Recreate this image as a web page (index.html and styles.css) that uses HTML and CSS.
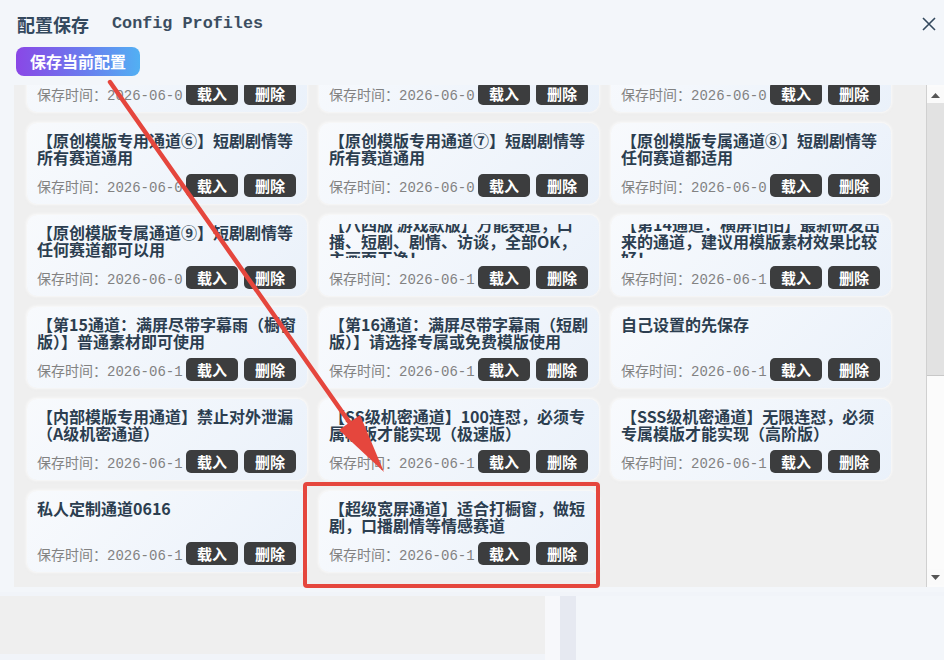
FILE: index.html
```html
<!DOCTYPE html>
<html lang="zh-CN">
<head>
    <meta charset="UTF-8">
    <meta name="viewport" content="width=device-width, initial-scale=1.0">
    <title>配置保存</title>
    <link rel="stylesheet" href="styles.css">
</head>
<body>
    <div class="dialog">
        <div class="dialog-head">
            <h1 class="dialog-title">配置保存<span class="en">Config Profiles</span></h1>
            <button class="close-btn" aria-label="关闭">
                <svg width="14" height="14" viewBox="0 0 14 14"><path d="M1 1L13 13M13 1L1 13" stroke="#34495e" stroke-width="1.6" fill="none"/></svg>
            </button>
        </div>
        <div class="toolbar">
            <button class="save-btn">保存当前配置</button>
        </div>

        <div class="list-wrap">
            <div class="profile-list" id="profileList">
                <div class="profile-grid">
                    <div class="card">
                        <div class="card-title">【原创模版专用通道③】短剧剧情等所有赛道通用</div>
                        <div class="card-foot"><span class="time">保存时间：2026-06-03 10:12</span><button class="btn">载入</button><button class="btn">删除</button></div>
                    </div>
                    <div class="card">
                        <div class="card-title">【原创模版专用通道④】短剧剧情等所有赛道通用</div>
                        <div class="card-foot"><span class="time">保存时间：2026-06-03 10:20</span><button class="btn">载入</button><button class="btn">删除</button></div>
                    </div>
                    <div class="card">
                        <div class="card-title">【原创模版专用通道⑤】短剧剧情等所有赛道通用</div>
                        <div class="card-foot"><span class="time">保存时间：2026-06-04 09:41</span><button class="btn">载入</button><button class="btn">删除</button></div>
                    </div>

                    <div class="card">
                        <div class="card-title">【原创模版专用通道⑥】短剧剧情等所有赛道通用</div>
                        <div class="card-foot"><span class="time">保存时间：2026-06-05 14:02</span><button class="btn">载入</button><button class="btn">删除</button></div>
                    </div>
                    <div class="card">
                        <div class="card-title">【原创模版专用通道⑦】短剧剧情等所有赛道通用</div>
                        <div class="card-foot"><span class="time">保存时间：2026-06-05 14:30</span><button class="btn">载入</button><button class="btn">删除</button></div>
                    </div>
                    <div class="card">
                        <div class="card-title">【原创模版专属通道⑧】短剧剧情等任何赛道都适用</div>
                        <div class="card-foot"><span class="time">保存时间：2026-06-06 11:18</span><button class="btn">载入</button><button class="btn">删除</button></div>
                    </div>

                    <div class="card">
                        <div class="card-title">【原创模版专属通道⑨】短剧剧情等任何赛道都可以用</div>
                        <div class="card-foot"><span class="time">保存时间：2026-06-08 16:45</span><button class="btn">载入</button><button class="btn">删除</button></div>
                    </div>
                    <div class="card">
                        <div class="card-title is-long"><span>【八四版 游戏款版】万能赛道，口播、短剧、剧情、访谈，全部OK，主画面干净！</span></div>
                        <div class="card-foot"><span class="time">保存时间：2026-06-10 13:07</span><button class="btn">载入</button><button class="btn">删除</button></div>
                    </div>
                    <div class="card">
                        <div class="card-title is-long"><span>【第14通道：横屏怕怕】最新研发出来的通道，建议用模版素材效果比较好！</span></div>
                        <div class="card-foot"><span class="time">保存时间：2026-06-11 20:33</span><button class="btn">载入</button><button class="btn">删除</button></div>
                    </div>

                    <div class="card">
                        <div class="card-title">【第15通道：满屏尽带字幕雨（橱窗版）】普通素材即可使用</div>
                        <div class="card-foot"><span class="time">保存时间：2026-06-12 09:15</span><button class="btn">载入</button><button class="btn">删除</button></div>
                    </div>
                    <div class="card">
                        <div class="card-title">【第16通道：满屏尽带字幕雨（短剧版）】请选择专属或免费模版使用</div>
                        <div class="card-foot"><span class="time">保存时间：2026-06-12 09:40</span><button class="btn">载入</button><button class="btn">删除</button></div>
                    </div>
                    <div class="card">
                        <div class="card-title">自己设置的先保存</div>
                        <div class="card-foot"><span class="time">保存时间：2026-06-13 18:22</span><button class="btn">载入</button><button class="btn">删除</button></div>
                    </div>

                    <div class="card">
                        <div class="card-title">【内部模版专用通道】禁止对外泄漏（A级机密通道）</div>
                        <div class="card-foot"><span class="time">保存时间：2026-06-14 10:05</span><button class="btn">载入</button><button class="btn">删除</button></div>
                    </div>
                    <div class="card">
                        <div class="card-title">【SS级机密通道】100连怼，必须专属模版才能实现（极速版）</div>
                        <div class="card-foot"><span class="time">保存时间：2026-06-15 15:51</span><button class="btn">载入</button><button class="btn">删除</button></div>
                    </div>
                    <div class="card">
                        <div class="card-title">【SSS级机密通道】无限连怼，必须专属模版才能实现（高阶版）</div>
                        <div class="card-foot"><span class="time">保存时间：2026-06-15 16:20</span><button class="btn">载入</button><button class="btn">删除</button></div>
                    </div>

                    <div class="card">
                        <div class="card-title">私人定制通道0616</div>
                        <div class="card-foot"><span class="time">保存时间：2026-06-16 08:30</span><button class="btn">载入</button><button class="btn">删除</button></div>
                    </div>
                    <div class="card">
                        <div class="card-title">【超级宽屏通道】适合打橱窗，做短剧，口播剧情等情感赛道</div>
                        <div class="card-foot"><span class="time">保存时间：2026-06-16 21:12</span><button class="btn">载入</button><button class="btn">删除</button></div>
                    </div>
                </div>
            </div>

            <!-- classic scrollbar next to the list -->
            <div class="scrollbar">
                <div class="sb-arrow"><svg width="9" height="5" viewBox="0 0 9 5"><path d="M0 5L4.5 0L9 5Z" fill="#555"/></svg></div>
                <div class="sb-thumb"></div>
                <div class="sb-track"></div>
                <div class="sb-arrow"><svg width="9" height="5" viewBox="0 0 9 5"><path d="M0 0L4.5 5L9 0Z" fill="#555"/></svg></div>
            </div>
        </div>
    </div>

    <!-- part of the main window under the dialog -->
    <div class="app-back">
        <div class="app-left"></div>
        <div class="app-gap"></div>
        <div class="app-divider"></div>
        <div class="app-right"></div>
    </div>

    <!-- red markup drawn on top -->
    <svg class="markup" width="944" height="660" viewBox="0 0 944 660">
        <line x1="110" y1="82" x2="352" y2="426" stroke="#e5463d" stroke-width="4.5" stroke-linecap="round"/>
        <polygon points="384,472 360,415 339,430" fill="#e5463d"/>
        <rect x="305" y="484" width="293" height="102" rx="2" fill="none" stroke="#e5463d" stroke-width="4"/>
    </svg>

    <script>
        // list is shown scrolled down a bit
        document.getElementById("profileList").scrollTop = 62;
    </script>
</body>
</html>
```

FILE: styles.css
```css
body {
    margin: 0;
    background-color: #f1f4f9;
    font-family: "Noto Sans CJK SC", "Noto Sans", sans-serif;
    overflow: hidden;
}
.dialog {
    background-color: #f3f6fa;
    padding-bottom: 5px;
}
.dialog-head {
    display: flex;
    justify-content: space-between;
    align-items: center;
    padding: 11px 8px 0 17px;
    height: 26px;
}
.dialog-title {
    margin: 0;
    font-size: 18px;
    line-height: 24px;
    font-weight: 700;
    color: #34495e;
    display: flex;
    align-items: center;
}
.dialog-title .en {
    font-family: "Liberation Mono", monospace;
    font-size: 16.8px;
    font-weight: 700;
    margin-left: 23px;
    color: #3b4d60;
}
.close-btn {
    border: none;
    background: none;
    padding: 0;
    width: 14px;
    height: 14px;
}
.toolbar {
    padding: 10px 0 9px 16px;
}
.save-btn {
    height: 29px;
    padding: 0 14px;
    border: none;
    border-radius: 8px;
    background: linear-gradient(90deg, #8a47e6, #6a7cee 55%, #52b0f3);
    color: #fff;
    font-family: "Noto Sans CJK SC", sans-serif;
    font-size: 16px;
    font-weight: 700;
    line-height: 29px;
}
.list-wrap {
    display: flex;
    height: 502px;
    margin-left: 14px;
    background-color: #efefef;
}
.profile-list {
    flex: 1;
    overflow: hidden;
}
.profile-grid {
    display: grid;
    grid-template-columns: repeat(3, 280px);
    gap: 11px 12px;
    padding: 8px 0 18px 13px;
}
.card {
    background: linear-gradient(135deg, #f8fafd, #eaf1fa);
    border-radius: 10px;
    padding: 9px 11px 7px 10px;
    box-shadow: 0 0 3px 1px rgba(255, 255, 255, 0.9), 0 1px 4px rgba(0, 0, 0, 0.05);
}
.card-title {
    height: 34px;
    overflow: hidden;
    font-size: 16px;
    line-height: 17px;
    font-weight: 700;
    color: #2c3e50;
    margin-bottom: 8px;
}
.card-title.is-long {
    display: flex;
    align-items: center;
}
.card-foot {
    display: flex;
    align-items: center;
    height: 23px;
}
.time {
    flex: 1;
    overflow: hidden;
    white-space: nowrap;
    font-family: "Liberation Mono", "Noto Sans CJK SC", monospace;
    font-size: 14px;
    color: #828282;
    margin-right: 3px;
}
.btn {
    width: 52px;
    height: 23px;
    padding: 0;
    border: none;
    border-radius: 5px;
    background-color: #3c3d3e;
    color: #fff;
    font-family: "Noto Sans CJK SC", sans-serif;
    font-size: 15px;
    font-weight: 700;
    line-height: 23px;
}
.btn + .btn {
    margin-left: 6px;
}
.scrollbar {
    width: 17px;
    display: flex;
    flex-direction: column;
    border-left: 1px solid #d0d0d0;
    background-color: #fbfbfb;
    padding: 2px 0;
}
.sb-arrow {
    height: 16px;
    display: flex;
    align-items: center;
    justify-content: center;
    background-color: #fafafa;
}
.sb-thumb {
    height: 272px;
    background-color: #e2e2e2;
    border-bottom: 1px solid #c8c8c8;
}
.sb-track {
    flex: 1;
    background-color: #fbfbfb;
}
.app-back {
    display: flex;
    height: 68px;
    padding-top: 4px;
}
.app-left {
    width: 545px;
    height: 58px;
    background-color: #efefef;
}
.app-gap {
    width: 15px;
    background-color: #f7f8fb;
}
.app-divider {
    width: 16px;
    background-color: #e6e9f1;
}
.app-right {
    flex: 1;
    background-color: #f3f6fa;
}
.markup {
    position: absolute;
    top: 0;
    left: 0;
    pointer-events: none;
}
```
